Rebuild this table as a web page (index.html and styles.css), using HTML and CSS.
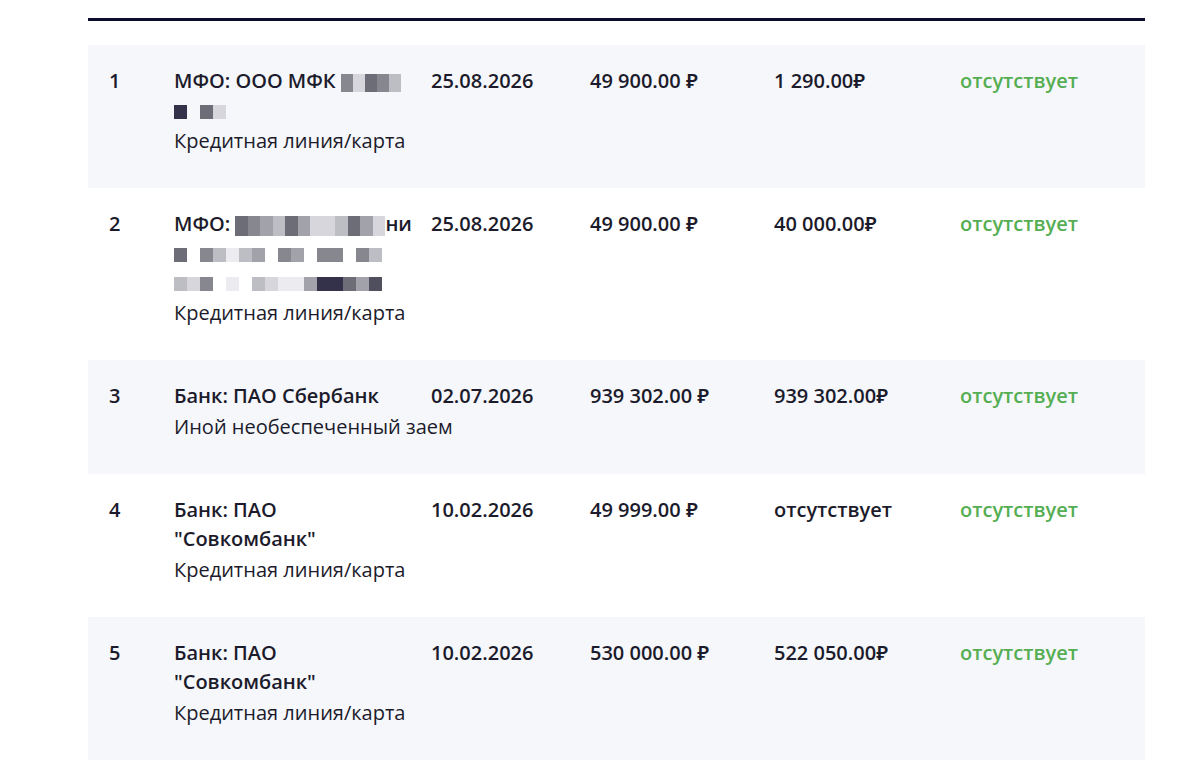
FILE: index.html
```html
<!DOCTYPE html>
<html lang="ru">
<head>
<meta charset="utf-8">
<link rel="stylesheet" href="styles.css">
</head>
<body>
<div class="table">
  <div class="rule"></div>

  <div class="row alt">
    <div class="num">1</div>
    <div class="name">
      <div class="title">МФО: ООО МФК <span class="mos m1a"><i class="g5"></i><i class="g2"></i><i class="g6"></i><i class="g5"></i><i class="g3"></i></span> <span class="mos m1b"><i class="g8"></i><i class="g0"></i><i class="g6"></i><i class="g2"></i></span></div>
      <div class="sub">Кредитная линия/карта</div>
    </div>
    <div class="date">25.08.2026</div>
    <div class="amt">49 900.00 ₽</div>
    <div class="amt2">1 290.00₽</div>
    <div class="status">отсутствует</div>
  </div>

  <div class="row">
    <div class="num">2</div>
    <div class="name">
      <div class="title">МФО: <span class="mos m2a"><i class="g6"></i><i class="g5"></i><i class="g4"></i><i class="g3"></i><i class="g6"></i><i class="g4"></i><i class="g2"></i><i class="g2"></i><i class="g3"></i><i class="g6"></i><i class="g4"></i><i class="g2"></i></span>ни <span class="mos m2b"><i class="g6"></i><i class="g0"></i><i class="g5"></i><i class="g3"></i><i class="g1"></i><i class="g3"></i><i class="g4"></i><i class="g0"></i><i class="g5"></i><i class="g4"></i><i class="g0"></i><i class="g5"></i><i class="g5"></i><i class="g0"></i><i class="g5"></i><i class="g3"></i></span><span class="mos m2c"><i class="g3"></i><i class="g2"></i><i class="g5"></i><i class="g0"></i><i class="g1"></i><i class="g0"></i><i class="g3"></i><i class="g2"></i><i class="g1"></i><i class="g1"></i><i class="g4"></i><i class="g8"></i><i class="g8"></i><i class="g6"></i><i class="g4"></i><i class="g7"></i></span></div>
      <div class="sub">Кредитная линия/карта</div>
    </div>
    <div class="date">25.08.2026</div>
    <div class="amt">49 900.00 ₽</div>
    <div class="amt2">40 000.00₽</div>
    <div class="status">отсутствует</div>
  </div>

  <div class="row alt">
    <div class="num">3</div>
    <div class="name">
      <div class="title">Банк: ПАО Сбербанк</div>
      <div class="sub">Иной необеспеченный заем</div>
    </div>
    <div class="date">02.07.2026</div>
    <div class="amt">939 302.00 ₽</div>
    <div class="amt2">939 302.00₽</div>
    <div class="status">отсутствует</div>
  </div>

  <div class="row">
    <div class="num">4</div>
    <div class="name">
      <div class="title">Банк: ПАО "Совкомбанк"</div>
      <div class="sub">Кредитная линия/карта</div>
    </div>
    <div class="date">10.02.2026</div>
    <div class="amt">49 999.00 ₽</div>
    <div class="amt2">отсутствует</div>
    <div class="status">отсутствует</div>
  </div>

  <div class="row alt">
    <div class="num">5</div>
    <div class="name">
      <div class="title">Банк: ПАО "Совкомбанк"</div>
      <div class="sub">Кредитная линия/карта</div>
    </div>
    <div class="date">10.02.2026</div>
    <div class="amt">530 000.00 ₽</div>
    <div class="amt2">522 050.00₽</div>
    <div class="status">отсутствует</div>
  </div>
</div>
</body>
</html>
```

FILE: styles.css
```css
html, body {
  margin: 0;
  padding: 0;
  background: #ffffff;
}

body {
  font-family: "Open Sans", "Noto Sans", "DejaVu Sans", sans-serif;
  font-size: 20px;
  color: #1c1b2b;
}

.table {
  width: 1057px;
  margin: 18px 0 0 88px;
}

.rule {
  height: 3px;
  background: #0e0c2e;
  margin-bottom: 24px;
}

.row {
  display: grid;
  grid-template-columns: 65px 257px 159px 184px 186px 1fr;
  padding: 21px 0 33px 21px;
  line-height: 29px;
  font-weight: 600;
}

.row.alt {
  background: #f5f7fb;
}

.title {
  width: 242px;
}

.sub {
  font-weight: 400;
  white-space: nowrap;
  margin-top: 2px;
}

.status {
  color: #55ae52;
}

.mos {
  display: inline-grid;
  vertical-align: middle;
}

.mos i {
  display: block;
}

.m1a {
  grid-template-columns: repeat(5, 12px);
  grid-template-rows: 18px;
}

.m1b {
  grid-template-columns: repeat(4, 13px);
  grid-template-rows: 14px;
}

.m2a {
  grid-template-columns: repeat(12, 12.5px);
  grid-template-rows: 20px;
}

.m2b, .m2c {
  grid-template-columns: repeat(16, 13px);
  grid-template-rows: 14px;
}

.g0 { background: transparent; }
.g1 { background: #ececf0; }
.g2 { background: #d6d6dc; }
.g3 { background: #bdbdc4; }
.g4 { background: #a2a2ab; }
.g5 { background: #87878f; }
.g6 { background: #6d6d78; }
.g7 { background: #4f4f5e; }
.g8 { background: #34324a; }
```
